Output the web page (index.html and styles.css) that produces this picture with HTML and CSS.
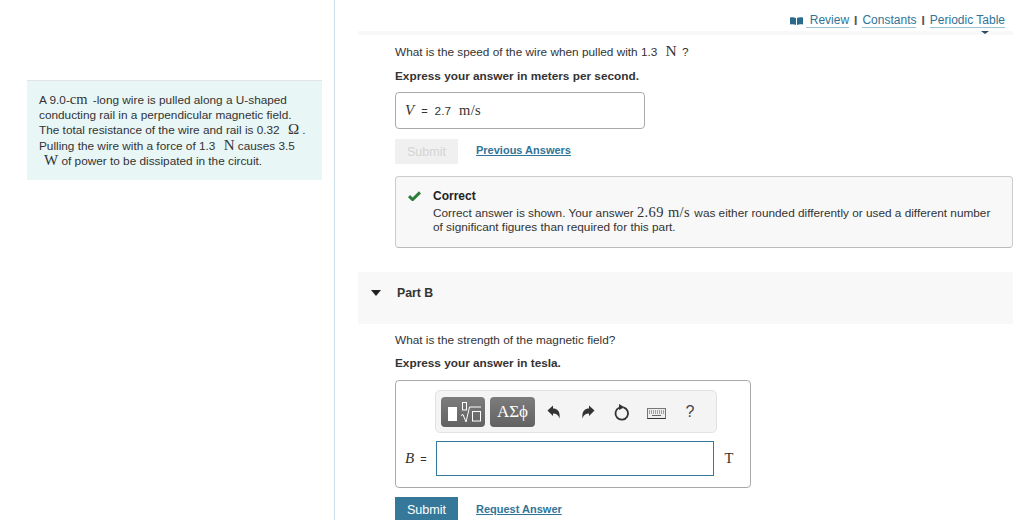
FILE: index.html
```html
<!DOCTYPE html>
<html lang="en">
<head>
<meta charset="utf-8">
<title>Part B</title>
<link rel="stylesheet" href="styles.css">
</head>
<body>
<div class="page">
  <aside class="sidebar">
    <div class="intro">
      <p>A 9.0-<span class="m cm">cm</span> -long wire is pulled along a U-shaped<br>conducting rail in a perpendicular magnetic field.<br>The total resistance of the wire and rail is 0.32 <span class="m gap">Ω</span> .<br>Pulling the wire with a force of 1.3 <span class="m gap">N</span> causes 3.5<br><span class="m gap w">W</span> of power to be dissipated in the circuit.</p>
    </div>
  </aside>
  <main class="main">
    <nav class="links">
      <svg class="book" width="13" height="8" viewBox="0 0 13 8"><path d="M0 0.500C2 0 4 0 6 1v7C4 7 2 7 0 7.500zM13 0.500C11 0 9 0 7 1v7c2-1 4-1 6-.5z" fill="#2b6a8c"/></svg>
      <a href="#">&nbsp;Review</a><span class="sep">I</span><a href="#">Constants</a><span class="sep">I</span><a href="#">Periodic Table</a>
    </nav>
    <div class="rule"><span class="caret"></span></div>
    <section class="part">
      <p class="q">What is the speed of the wire when pulled with 1.3 <span class="m big">N</span> ?</p>
      <p class="hint">Express your answer in meters per second.</p>
      <div class="answered"><i class="m var">V</i><span class="eq">=</span><span>2.7</span><span class="m unit">m/s</span></div>
      <div class="actions">
        <button class="btn off">Submit</button>
        <a class="action-link" href="#">Previous Answers</a>
      </div>
      <div class="feedback">
        <svg class="check" width="13" height="10" viewBox="0 0 13 10"><path d="M1 5.200l3.600 3.400L12 1.400" fill="none" stroke="#2f7d3b" stroke-width="3"/></svg>
        <div>
          <strong>Correct</strong>
          <p>Correct answer is shown. Your answer <span class="m num">2.69 m/s</span> was either rounded differently or used a different number of significant figures than required for this part.</p>
        </div>
      </div>
    </section>
    <div class="part-head"><span class="tri"></span><strong>Part B</strong></div>
    <section class="part b">
      <p class="q">What is the strength of the magnetic field?</p>
      <p class="hint">Express your answer in tesla.</p>
      <div class="editor">
        <div class="toolbar">
          <span class="tool">
            <svg width="44" height="30" viewBox="0 0 44 30"><rect x="7" y="10" width="9" height="14" fill="#fff"/><rect x="21.500" y="5.500" width="4" height="7.500" fill="none" stroke="#fff"/><path d="M20 18.500l2-1 3 7.500 3.500-15H40" fill="none" stroke="#fff"/><rect x="31.500" y="14.500" width="8" height="9.500" fill="none" stroke="#fff"/></svg>
          </span>
          <span class="tool greek">ΑΣϕ</span>
          <span class="icons">
            <span class="cell"><svg width="14" height="14" viewBox="0 0 14 14"><path d="M0.500 5.500L6 .5v3c4 0 7.500 2.500 6.500 10-1-3.500-3-5-6.500-5V11z" fill="#333"/></svg></span>
            <span class="cell"><svg width="14" height="14" viewBox="0 0 14 14"><path d="M13.500 5.500L8 .5v3c-4 0-7.500 2.500-6.500 10 1-3.500 3-5 6.500-5V11z" fill="#333"/></svg></span>
            <span class="cell"><svg width="16" height="18" viewBox="0 0 16 18"><path d="M9.500 4.300a6.300 6.300 0 1 1-4.500.4" fill="none" stroke="#333" stroke-width="1.800"/><path d="M5 1l5.500 3.200L5 7z" fill="#333"/></svg></span>
            <span class="cell kbd"><svg width="19" height="11" viewBox="0 0 19 11"><rect x=".5" y=".5" width="18" height="10" fill="#eee" stroke="#777"/><path d="M2 3h15M2 5h15" stroke="#555" stroke-dasharray="1 1"/><path d="M5 7.500h9" stroke="#666"/><path d="M.5 10.500h18" stroke="#333"/></svg></span>
            <span class="cell help">?</span>
          </span>
        </div>
        <div class="input-row">
          <i class="m var">B</i><span class="eq">=</span>
          <div class="input"></div>
          <span class="m tesla">T</span>
        </div>
      </div>
      <div class="actions second">
        <button class="btn">Submit</button>
        <a class="action-link" href="#">Request Answer</a>
      </div>
    </section>
  </main>
</div>
</body>
</html>
```
FILE: styles.css
```css
* { box-sizing: border-box; }
html, body { margin: 0; height: 520px; overflow: hidden; background: #fff; }
body { font-family: "Liberation Sans", Arial, sans-serif; font-size: 11.800px; color: #333; }
p { margin: 0; }
.m { font-family: "Liberation Serif", "DejaVu Serif", serif; font-size: 14px; line-height: 0; }
.page { display: flex; height: 520px; }

.sidebar { width: 335px; flex: none; border-right: 1px solid #cfdde8; padding: 80px 12px 0 27px; }
.intro { background: #e9f6f6; border-top: 1px solid #dfe5e8; padding: 12px 12px 12px 12px; height: 100px; line-height: 15.200px; font-size: 11.800px; }
.intro .m { font-size: 15px; }
.intro .cm { font-size: 14.500px; margin-right: 2px; }
.intro .gap { margin-left: 5px; }
.intro .w { margin-left: 5px; }

.main { flex: 1; padding-right: 11px; padding-left: 23px; }
.links { display: flex; align-items: center; justify-content: flex-end; height: 31px; padding: 10px 8px 0 0; font-size: 12px; }
.links a { color: #2f7496; text-decoration: none; border-bottom: 1px solid #9fc3d6; line-height: 13px; }
.book { margin-right: 3px; }
.sep { color: #555; font-size: 12px; margin: 0 5px; font-weight: bold; }
.rule { height: 4px; background: #f8f8f8; position: relative; }
.caret { position: absolute; right: 24px; top: 0; border: 4px solid transparent; border-top: 3px solid #2c4a5c; border-bottom: 0; }

.part { padding-left: 37px; }
.q { padding-top: 9px; height: 28px; line-height: 16px; }
.big { font-size: 15.500px; margin: 0 2px 0 5px; }
.hint { font-weight: bold; height: 28px; line-height: 17px; padding-top: 5px; }
.answered { width: 250px; height: 37px; margin-top: 1px; border: 1px solid #aaa; border-radius: 4px; display: flex; align-items: center; padding-left: 9px; }
.var { font-style: italic; font-size: 15px; line-height: 1; }
.eq { margin: 0 7px 0 7px; font-size: 11px; }
.unit { margin-left: 8px; font-size: 14.500px; letter-spacing: .4px; line-height: 1; }

.actions { display: flex; align-items: center; margin-top: 10px; height: 25px; gap: 18px; }
.btn { width: 63px; height: 25px; border: 0; background: #35789a; color: #fff; font: 12.600px "Liberation Sans", Arial, sans-serif; padding: 0; }
.btn.off { background: #f0f0f0; color: #d4d4d4; }
.action-link { font-size: 11px; font-weight: bold; color: #2f7496; text-decoration: underline; padding-bottom: 3px; }

.feedback { width: 618px; height: 72px; margin-top: 12px; background: #f8f8f8; border: 1px solid #ccc; border-bottom-color: #bbb; border-radius: 4px; display: flex; padding: 12px 14px 0 12px; gap: 12px; line-height: 14.500px; }
.check { flex: none; margin-top: 2px; }
.feedback strong { display: block; color: #222; font-size: 12px; margin-bottom: 2px; }
.feedback .num { font-size: 14.500px; letter-spacing: .4px; margin-right: 1px; }

.part-head { height: 52px; margin-top: 24px; background: #f8f8f8; display: flex; align-items: center; padding: 0 0 10px 13px; gap: 16px; }
.part-head strong { font-size: 12.300px; color: #333; }
.tri { border: 5px solid transparent; border-top: 6px solid #222; border-bottom: 0; }

.b .q { padding-top: 8px; height: 27px; }
.b .hint { height: 29px; padding-top: 4px; }
.editor { width: 356px; height: 108px; border: 1px solid #aaa; border-radius: 4px; padding-top: 9px; }
.toolbar { width: 282px; height: 43px; margin-left: 39px; background: #f4f4f4; border: 1px solid #e2e2e2; border-radius: 5px; display: flex; align-items: center; padding-left: 5px; gap: 5px; }
.tool { width: 44px; height: 30px; flex: none; border-radius: 4px; background: linear-gradient(#7c7c7c, #626262); display: flex; align-items: center; justify-content: center; color: #fff; }
.greek { width: 45px; font-family: "Liberation Serif", serif; font-size: 17px; }
.icons { display: flex; align-items: center; margin-left: -3px; }
.cell { width: 34px; display: flex; justify-content: center; align-items: center; }
.kbd { padding-top: 3px; }
.help { font-size: 16px; color: #444; }
.input-row { display: flex; align-items: center; margin-top: 8px; padding-left: 9px; height: 35px; }
.input-row .eq { margin: 0 9px 0 6px; }
.input { width: 278px; height: 35px; border: 1px solid #35789a; background: #fff; }
.tesla { margin-left: 11px; font-size: 14.500px; line-height: 1; }
.second { margin-top: 9px; }
.second .action-link { padding-bottom: 1px; }
```
